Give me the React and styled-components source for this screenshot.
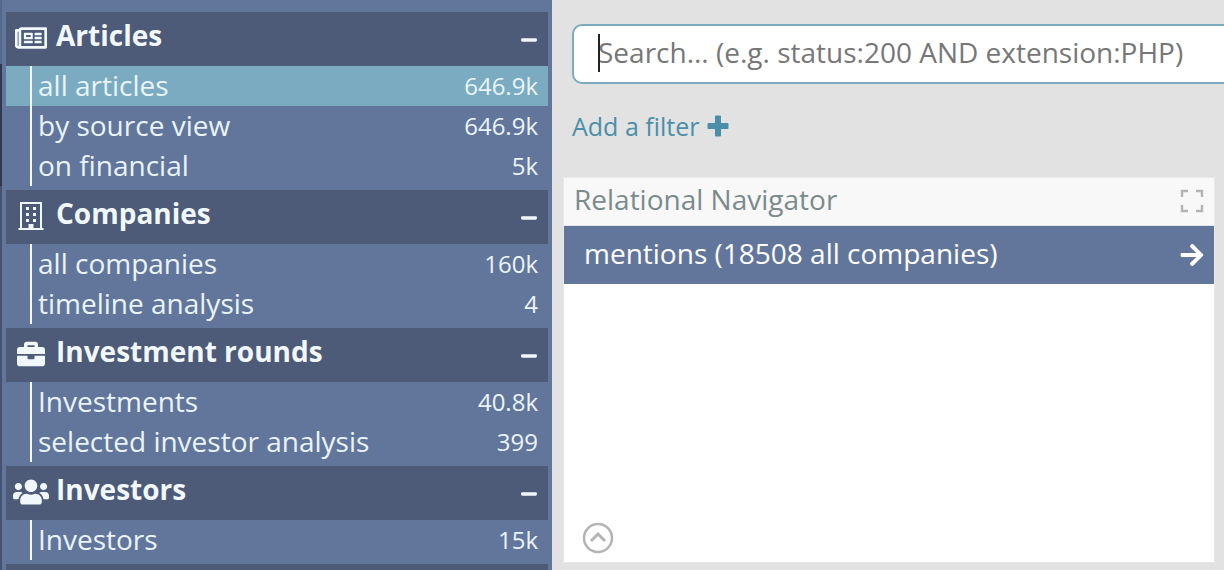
import React from 'react';
import styled, { createGlobalStyle } from 'styled-components';
import { FaBriefcase, FaUsers, FaRegNewspaper, FaArrowRight, FaMinus } from 'react-icons/fa';

const GlobalStyle = createGlobalStyle`
    html, body {
        margin: 0;
        padding: 0;
        height: 570px;
        overflow: hidden;
        background: #e2e2e2;
        font-family: "Open Sans", sans-serif;
    }
`;

const Page = styled.div`
    display: flex;
    width: 1224px;
    height: 570px;
    overflow: hidden;
`;

const Edge = styled.div`
    width: 2px;
    flex-shrink: 0;
    display: flex;
    flex-direction: column;
    background: #46526f;
`;

const EdgeTop = styled.div`
    height: 64px;
    background: #56678a;
`;

const EdgeDark = styled.div`
    height: 122px;
    background: #2f3850;
`;

const Sidebar = styled.div`
    width: 542px;
    padding: 12px 4px 0 4px;
    flex-shrink: 0;
    background: #62769c;
    display: flex;
    flex-direction: column;
    gap: 4px;
`;

const Group = styled.div``;

const GroupHeader = styled.div`
    height: 54px;
    flex-shrink: 0;
    background: #4d5a78;
    color: #f0f8fc;
    display: flex;
    align-items: center;
    font-size: 28px;
    font-weight: 700;
`;

const HeaderIcon = styled.span`
    width: 50px;
    display: flex;
    justify-content: center;
    flex-shrink: 0;
    margin-top: -2px;
`;

const HeaderLabel = styled.span`
    flex: 1;
    margin-top: -9px;
`;

const Collapse = styled.span`
    display: flex;
    margin-right: 10px;
    margin-top: 1px;
`;

const Items = styled.div`
    position: relative;
`;

const Rail = styled.div`
    position: absolute;
    left: 24px;
    top: 0;
    bottom: 0;
    width: 2px;
    background: #f4f9fc;
`;

const Item = styled.div`
    height: 40px;
    display: flex;
    align-items: center;
    justify-content: space-between;
    padding: 0 10px 0 32px;
    color: #e9f4f9;
    font-size: 28px;
    background: ${props => (props.$active ? '#7aabc0' : 'transparent')};
`;

const ItemLabel = styled.span`
    margin-top: -2px;
`;

const Count = styled.span`
    font-size: 24px;
    margin-top: -2px;
`;

const Main = styled.div`
    flex: 1;
    min-width: 0;
    padding: 24px 10px 0 12px;
    display: flex;
    flex-direction: column;
`;

const SearchBox = styled.div`
    box-sizing: border-box;
    margin-left: 8px;
    width: 700px;
    height: 60px;
    flex-shrink: 0;
    background: #fff;
    border: 2px solid #7aabc0;
    border-radius: 10px;
    display: flex;
    align-items: center;
    padding: 0 0 4px 24px;
    color: #777;
    font-size: 28px;
    white-space: nowrap;
    position: relative;
`;

const Caret = styled.span`
    position: absolute;
    left: 24px;
    top: 8px;
    width: 2px;
    height: 38px;
    background: #222;
`;

const AddFilter = styled.div`
    margin: 23px 0 0 8px;
    height: 38px;
    display: flex;
    align-items: center;
    gap: 8px;
    color: #4a8fa8;
    font-size: 25px;
`;

const Panel = styled.div`
    margin: 32px 0 0 -1px;
    width: 652px;
    height: 386px;
    flex-shrink: 0;
    box-sizing: border-box;
    border: 1px solid #e8e8e8;
    background: #fff;
    display: flex;
    flex-direction: column;
    position: relative;
`;

const PanelHeader = styled.div`
    height: 48px;
    flex-shrink: 0;
    box-sizing: border-box;
    background: #f8f8f8;
    border-bottom: 1px solid #e6e6e6;
    display: flex;
    align-items: center;
    justify-content: space-between;
    padding: 0 10px 2px 10px;
    color: #7b8a8b;
    font-size: 28px;
`;

const PanelTitle = styled.span`
    margin-top: -4px;
`;

const NavRow = styled.div`
    height: 58px;
    flex-shrink: 0;
    background: #62769c;
    color: #fff;
    display: flex;
    align-items: center;
    justify-content: space-between;
    padding: 0 9px 0 20px;
    font-size: 28px;
`;

const NavLabel = styled.span`
    margin-top: -4px;
`;

const ScrollUp = styled.svg`
    position: absolute;
    left: 18px;
    bottom: 8px;
`;

const BuildingIcon = () => (
    <svg width="26" height="30" viewBox="0 0 26 30" fill="none" stroke="currentColor" strokeWidth="2">
        <path d="M0.5 28h25M3 28V2h20v26" />
        <path d="M10.5 28v-5h5v5" fill="currentColor" stroke="none" />
        <path d="M8 6h3v3H8zM15 6h3v3h-3zM8 12h3v3H8zM15 12h3v3h-3zM8 18h3v3H8zM15 18h3v3h-3z" fill="currentColor" stroke="none" />
    </svg>
);

const sections = [
    {
        title: 'Articles',
        icon: <FaRegNewspaper size={32} />,
        items: [
            { label: 'all articles', count: '646.9k', active: true },
            { label: 'by source view', count: '646.9k' },
            { label: 'on financial', count: '5k' },
        ],
    },
    {
        title: 'Companies',
        icon: <BuildingIcon />,
        items: [
            { label: 'all companies', count: '160k' },
            { label: 'timeline analysis', count: '4' },
        ],
    },
    {
        title: 'Investment rounds',
        icon: <FaBriefcase size={28} />,
        items: [
            { label: 'Investments', count: '40.8k' },
            { label: 'selected investor analysis', count: '399' },
        ],
    },
    {
        title: 'Investors',
        icon: <FaUsers size={36} />,
        items: [{ label: 'Investors', count: '15k' }],
    },
];

const ExpandIcon = () => (
    <svg width="24" height="24" viewBox="0 0 24 24" fill="none" stroke="#b4b4b4" strokeWidth="2.4">
        <path d="M2 8V2h6M16 2h6v6M22 16v6h-6M8 22H2v-6" />
    </svg>
);

const PlusIcon = () => (
    <svg width="22" height="22" viewBox="0 0 22 22" fill="currentColor">
        <path d="M8 1.5a1 1 0 0 1 1-1h4a1 1 0 0 1 1 1V8h6.5a1 1 0 0 1 1 1v4a1 1 0 0 1-1 1H14v6.5a1 1 0 0 1-1 1H9a1 1 0 0 1-1-1V14H1.5a1 1 0 0 1-1-1V9a1 1 0 0 1 1-1H8z" />
    </svg>
);

const App = () => (
    <Page>
        <GlobalStyle />
        <Edge>
            <EdgeTop />
            <EdgeDark />
        </Edge>
        <Sidebar>
            {sections.map(section => (
                <Group key={section.title}>
                    <GroupHeader>
                        <HeaderIcon>{section.icon}</HeaderIcon>
                        <HeaderLabel>{section.title}</HeaderLabel>
                        <Collapse><FaMinus size={18} /></Collapse>
                    </GroupHeader>
                    <Items>
                        {section.items.map(item => (
                            <Item key={item.label} $active={item.active}>
                                <ItemLabel>{item.label}</ItemLabel>
                                <Count>{item.count}</Count>
                            </Item>
                        ))}
                        <Rail />
                    </Items>
                </Group>
            ))}
            <GroupHeader />
        </Sidebar>
        <Main>
            <SearchBox>
                <Caret />
                Search... (e.g. status:200 AND extension:PHP)
            </SearchBox>
            <AddFilter>
                Add a filter <PlusIcon />
            </AddFilter>
            <Panel>
                <PanelHeader>
                    <PanelTitle>Relational Navigator</PanelTitle>
                    <ExpandIcon />
                </PanelHeader>
                <NavRow>
                    <NavLabel>mentions (18508 all companies)</NavLabel>
                    <FaArrowRight size={26} />
                </NavRow>
                <ScrollUp width="32" height="32" viewBox="0 0 32 32" fill="none" stroke="#b4b4b4" strokeWidth="2.5">
                    <circle cx="16" cy="16" r="14" />
                    <path d="M9 19l7-7 7 7" strokeWidth="3" />
                </ScrollUp>
            </Panel>
        </Main>
    </Page>
);

export default App;
